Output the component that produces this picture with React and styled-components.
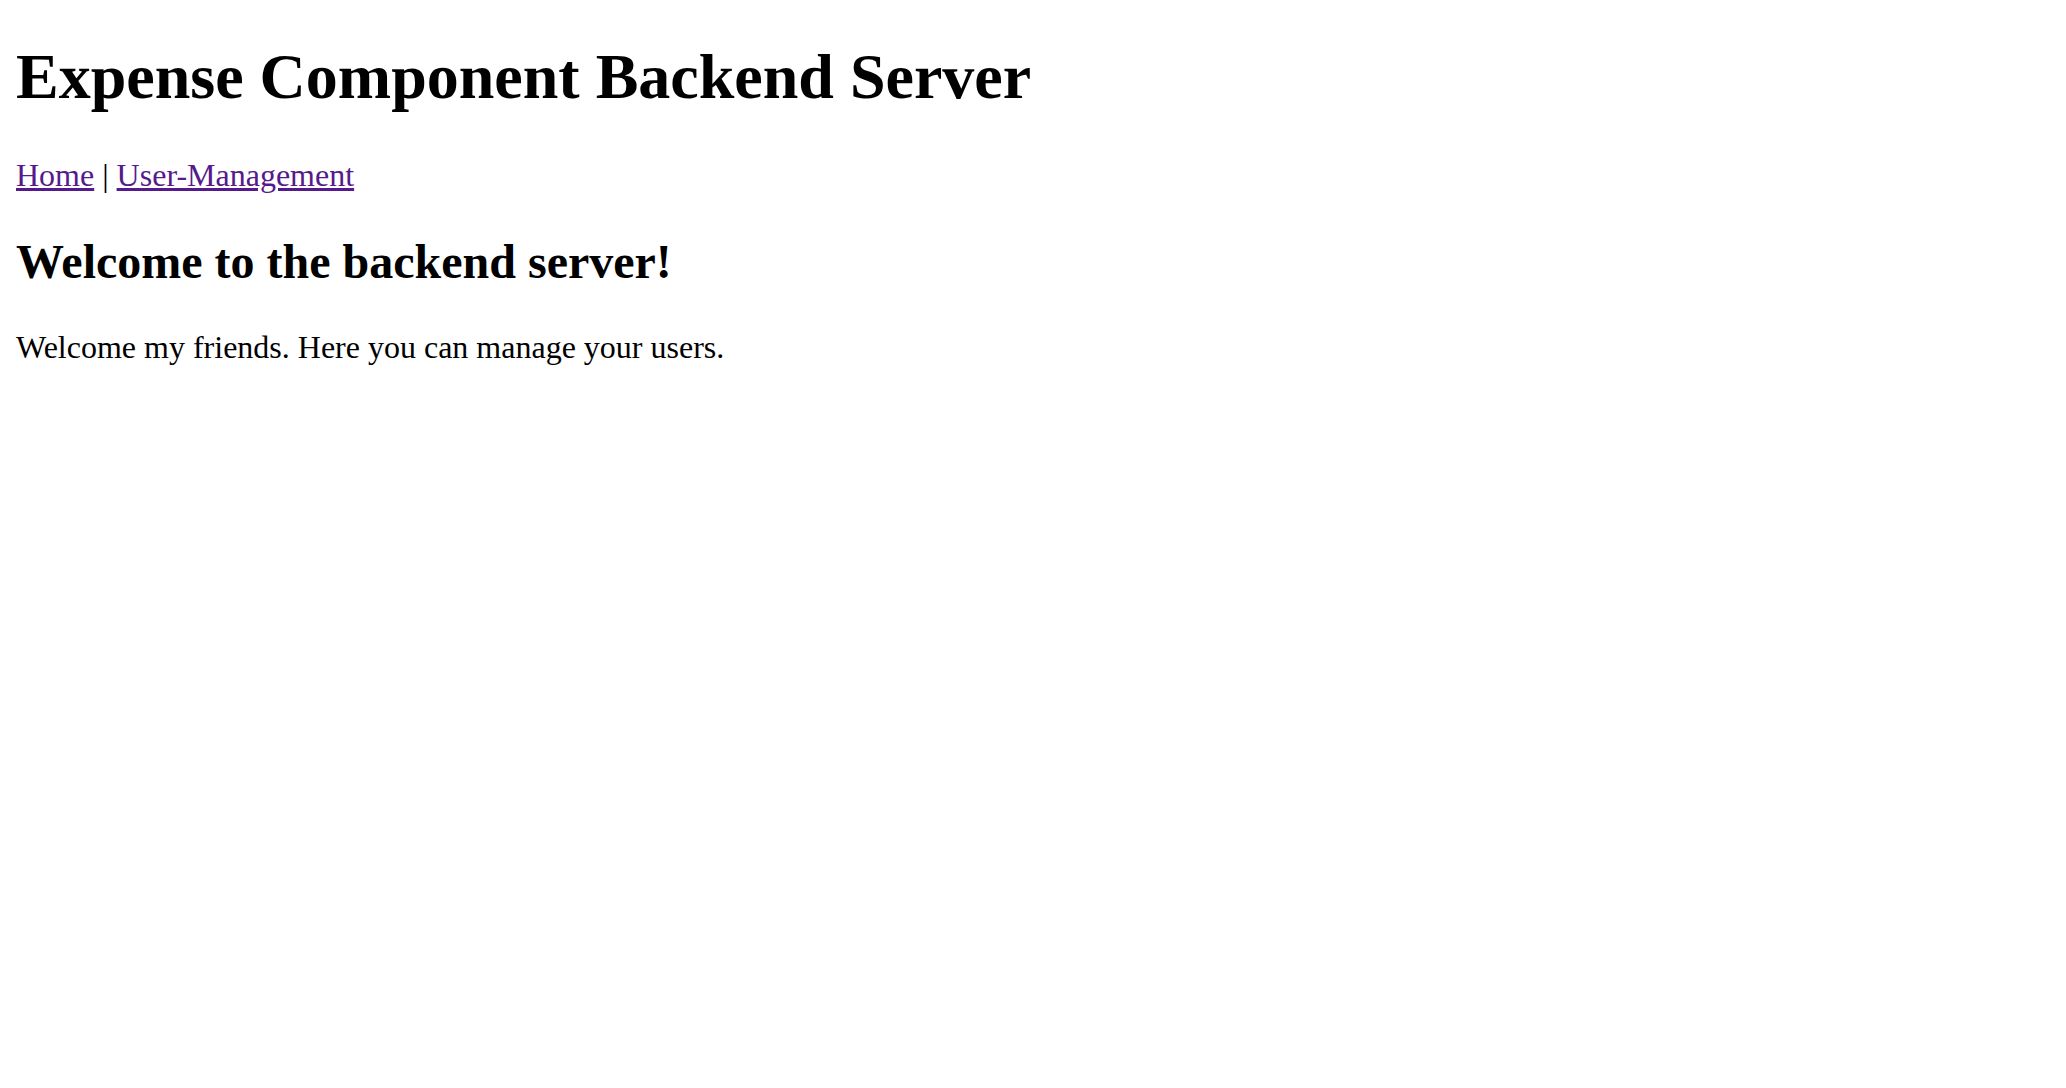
import React from 'react';
import styled, { createGlobalStyle } from "styled-components";

const GlobalStyle = createGlobalStyle`
    html, body {
        margin: 0;
        padding: 0;
        background: #ffffff;
    }
    body {
        padding: 0 16px 16px;
        font-family: "Liberation Serif", "Times New Roman", serif;
        color: #000000;
    }
`;

const Page = styled.div`
    display: block;
`;
const Title = styled.h1`
    font-size: 64px;
    font-weight: bold;
    margin: 40.3px 0 42.88px;
`;
const Nav = styled.p`
    font-size: 32px;
    margin: 32px 0;
`;
const NavLink = styled.a`
    color: #551a8b;
    text-decoration: underline;
    cursor: pointer;
`;
const Heading = styled.h2`
    font-size: 48px;
    font-weight: bold;
    margin: 39.84px 0;
`;
const Text = styled.p`
    font-size: 32px;
    margin: 32px 0;
`;

const App = () => {
    return (
        <Page>
            <GlobalStyle/>
            <Title>Expense Component Backend Server</Title>
            <Nav>
                <NavLink href="#">Home</NavLink> | <NavLink href="#">User-Management</NavLink>
            </Nav>
            <Heading>Welcome to the backend server!</Heading>
            <Text>Welcome my friends. Here you can manage your users.</Text>
        </Page>
    )
}

export default App
